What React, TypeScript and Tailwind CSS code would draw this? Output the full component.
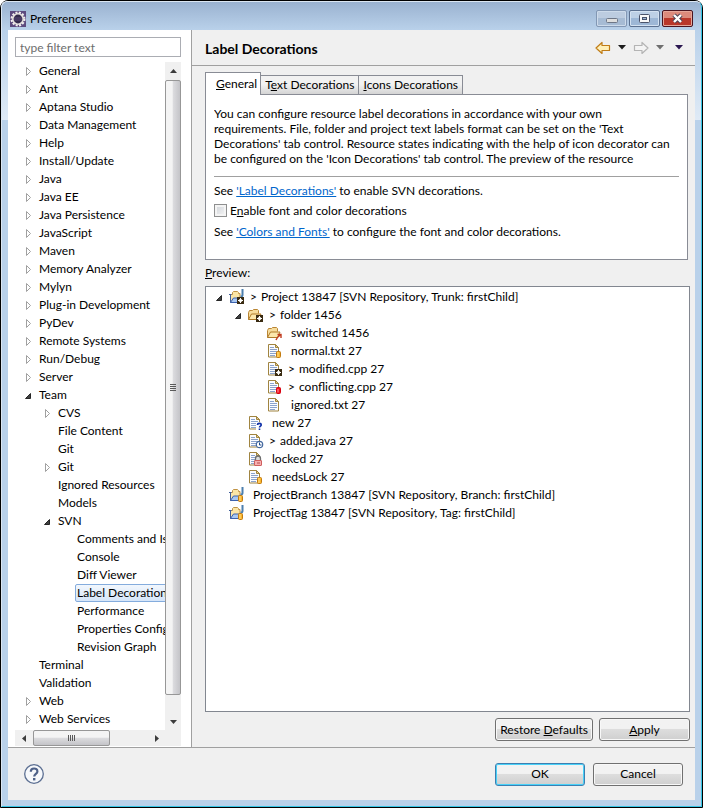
import clsx from "clsx";
import type { ReactNode } from "react";

type NavItem = {
  label: string;
  level: number;
  state?: "open" | "closed";
  selected?: boolean;
};

type PreviewItem = {
  label: string;
  level: number;
  icon: "project" | "folder" | "file";
  badge?: Badge;
  open?: boolean;
  dirty?: boolean;
};

type Badge = "star" | "switched" | "repo" | "conflict" | "new" | "added" | "lock";

const navItems: NavItem[] = [
  { label: "General", level: 0, state: "closed" },
  { label: "Ant", level: 0, state: "closed" },
  { label: "Aptana Studio", level: 0, state: "closed" },
  { label: "Data Management", level: 0, state: "closed" },
  { label: "Help", level: 0, state: "closed" },
  { label: "Install/Update", level: 0, state: "closed" },
  { label: "Java", level: 0, state: "closed" },
  { label: "Java EE", level: 0, state: "closed" },
  { label: "Java Persistence", level: 0, state: "closed" },
  { label: "JavaScript", level: 0, state: "closed" },
  { label: "Maven", level: 0, state: "closed" },
  { label: "Memory Analyzer", level: 0, state: "closed" },
  { label: "Mylyn", level: 0, state: "closed" },
  { label: "Plug-in Development", level: 0, state: "closed" },
  { label: "PyDev", level: 0, state: "closed" },
  { label: "Remote Systems", level: 0, state: "closed" },
  { label: "Run/Debug", level: 0, state: "closed" },
  { label: "Server", level: 0, state: "closed" },
  { label: "Team", level: 0, state: "open" },
  { label: "CVS", level: 1, state: "closed" },
  { label: "File Content", level: 1 },
  { label: "Git", level: 1 },
  { label: "Git", level: 1, state: "closed" },
  { label: "Ignored Resources", level: 1 },
  { label: "Models", level: 1 },
  { label: "SVN", level: 1, state: "open" },
  { label: "Comments and Issues", level: 2 },
  { label: "Console", level: 2 },
  { label: "Diff Viewer", level: 2 },
  { label: "Label Decorations", level: 2, selected: true },
  { label: "Performance", level: 2 },
  { label: "Properties Configuration", level: 2 },
  { label: "Revision Graph", level: 2 },
  { label: "Terminal", level: 0 },
  { label: "Validation", level: 0 },
  { label: "Web", level: 0, state: "closed" },
  { label: "Web Services", level: 0, state: "closed" },
];

const previewItems: PreviewItem[] = [
  { label: "Project 13847 [SVN Repository, Trunk: firstChild]", level: 0, icon: "project", badge: "star", open: true, dirty: true },
  { label: "folder 1456", level: 1, icon: "folder", badge: "star", open: true, dirty: true },
  { label: "switched 1456", level: 2, icon: "folder", badge: "switched" },
  { label: "normal.txt 27", level: 2, icon: "file", badge: "repo" },
  { label: "modified.cpp 27", level: 2, icon: "file", badge: "star", dirty: true },
  { label: "conflicting.cpp 27", level: 2, icon: "file", badge: "conflict", dirty: true },
  { label: "ignored.txt 27", level: 2, icon: "file" },
  { label: "new 27", level: 1, icon: "file", badge: "new" },
  { label: "added.java 27", level: 1, icon: "file", badge: "added", dirty: true },
  { label: "locked 27", level: 1, icon: "file", badge: "lock" },
  { label: "needsLock 27", level: 1, icon: "file", badge: "repo" },
  { label: "ProjectBranch 13847 [SVN Repository, Branch: firstChild]", level: 0, icon: "project", badge: "repo" },
  { label: "ProjectTag 13847 [SVN Repository, Tag: firstChild]", level: 0, icon: "project", badge: "repo" },
];

const indents = ["pl-0", "pl-[19px]", "pl-[38px]"];

function Expander({ state }: { state?: "open" | "closed" }) {
  return (
    <svg width="10" height="10" viewBox="0 0 10 10" className="shrink-0">
      {state === "closed" && <path d="M2.5 1.500v8L6.500 5.500z" fill="#fff" stroke="#a0a0a0" />}
      {state === "open" && <path d="M6.5 3.500v5h-5z" fill="#404040" stroke="#262626" />}
    </svg>
  );
}

function EclipseIcon() {
  return (
    <svg width="16" height="16" viewBox="0 0 16 16">
      <rect width="16" height="16" fill="#5d4a7e" />
      <circle cx="8" cy="8" r="6.3" fill="none" stroke="#f2eff0" strokeWidth="2.4" strokeDasharray="2 1.3" />
      <circle cx="8" cy="8" r="5.2" fill="#342a4c" stroke="#e4dfdc" strokeWidth="1.6" />
      <path d="M4 7h8M4 9h8" stroke="#5a4b78" />
    </svg>
  );
}

function BadgeShape({ badge }: { badge: Badge }) {
  switch (badge) {
    case "star":
      return (
        <g shapeRendering="crispEdges">
          <rect x="8" y="8" width="7" height="7" fill="#3a2b12" />
          <path d="M11 9h1v2h-1zM11 12h1v2h-1zM9 11h5v1h-5z" fill="#fff" />
          <path d="M10 10h1v1h-1zM12 10h1v1h-1zM10 12h1v1h-1zM12 12h1v1h-1z" fill="#cfc9bd" />
        </g>
      );
    case "switched":
      return (
        <path d="M9 15c0.500-2 1.500-3 4-4.800M10.500 9.500h3.500v3.500" fill="none" stroke="#c0391c" strokeWidth="1.400" />
      );
    case "repo":
      return (
        <g>
          <rect x="9.500" y="8.500" width="4" height="6" rx="1" fill="#f9b52c" stroke="#c27a10" />
          <path d="M11 9v5" stroke="#ffe08a" />
        </g>
      );
    case "conflict":
      return (
        <g>
          <rect x="9.500" y="8.500" width="4" height="6" rx="1" fill="#f3111d" stroke="#d8000f" />
          <path d="M11 10v3.500" stroke="#ff9b9b" />
        </g>
      );
    case "new":
      return (
        <g fill="none">
          <rect x="8" y="7" width="6" height="8" fill="#fff" />
          <path d="M9.500 10c0-2.200 3.700-2.200 3.700 0 0 1.200-1.700 1.200-1.700 2.600M11.500 13.500v1.500" stroke="#0d2fa8" strokeWidth="1.600" />
        </g>
      );
    case "added":
      return (
        <g>
          <circle cx="11.500" cy="11.500" r="3.200" fill="#fff" stroke="#44699f" strokeWidth="1.200" />
          <path d="M11.500 9.500V12h2" fill="none" stroke="#1f4a8c" />
        </g>
      );
    case "lock":
      return (
        <g>
          <path d="M7.500 10.500v-3a2.500 2.500 0 0 1 5 0v3" fill="#ddd" stroke="#6e6e6e" strokeWidth="1.300" />
          <rect x="6.500" y="9.500" width="7" height="5" rx="0.500" fill="#f6b0b0" stroke="#cf5f5f" />
          <path d="M9 12h3" stroke="#b94a4a" />
        </g>
      );
  }
}

function ResourceIcon({ icon, badge }: { icon: PreviewItem["icon"]; badge?: Badge }) {
  return (
    <svg width="16" height="16" viewBox="0 0 16 16" className="shrink-0">
      {icon === "file" && (
        <g>
          <path d="M1.500 1.500h7l3 3v9.500h-10z" fill="#fbfcff" stroke="#a08440" />
          <path d="M8.500 1.500v3h3z" fill="#e8cf8b" stroke="#a08440" />
          <path d="M3 4.500h4M3 6.500h7M3 8.500h7M3 10.500h7M3 12.500h5" stroke="#8ba3cc" />
        </g>
      )}
      {icon === "folder" && (
        <g>
          <path d="M0.500 12.500V5.500l1-2h3l1-1h4l1 1v3" fill="#f6dc9c" stroke="#b98534" />
          <path d="M0.500 12.500l3-5.500h9.500l-2.500 5.500z" fill="#fbe7ac" stroke="#b07a29" />
        </g>
      )}
      {icon === "project" && (
        <g>
          <path d="M1.500 13.500v-8h2v-2l1-1h4l1 1v1h1.500v9z" fill="#fbe6a6" stroke="#c09345" />
          <path d="M0 5.500h2.500M1.500 5v8.500" fill="none" stroke="#41609c" />
          <path d="M1.500 13.500l3-4.500h7.500l-2 4.500z" fill="#a9c8f2" stroke="#3d62ad" />
          <path d="M13.500 0v6q0 1.500-2 1.500" fill="none" stroke="#4c7fae" strokeWidth="2" />
        </g>
      )}
      {badge && <BadgeShape badge={badge} />}
    </svg>
  );
}

function NavArrow({ forward }: { forward?: boolean }) {
  return (
    <svg width="16" height="14" viewBox="0 0 16 14" className={clsx(forward && "-scale-x-100")}>
      <path
        d="M1 7l6-5.500v3h7.500v5H7v3z"
        fill={forward ? "#f4f4f4" : "#fff0b8"}
        stroke={forward ? "#b4b4b4" : "#c07c17"}
        strokeWidth="1.200"
        strokeLinejoin="round"
      />
    </svg>
  );
}

function Caret({ color }: { color: string }) {
  return (
    <svg width="8" height="5" viewBox="0 0 8 5">
      <path d="M0 0h8l-4 4.500z" fill={color} />
    </svg>
  );
}

function ScrollArrow({ label, d, className }: { label: string; d: string; className: string }) {
  return (
    <button type="button" aria-label={label} className={clsx("flex shrink-0 items-center justify-center", className)}>
      <svg width="7" height="7" viewBox="0 0 7 7">
        <path d={d} fill="#3c3c3c" />
      </svg>
    </button>
  );
}

function PushButton({ children, primary }: { children: ReactNode; primary?: boolean }) {
  return (
    <button
      type="button"
      className={clsx(
        "h-[23px] rounded-[3px] border bg-linear-to-b from-[#f2f2f2] from-45% via-[#dddddd] via-50% to-[#cfcfcf] px-1 whitespace-nowrap",
        primary
          ? "border-[#3c7fb1] inset-ring-1 inset-ring-[#48d1f8]"
          : "border-[#707070] inset-ring-1 inset-ring-[#f8f8f8]",
      )}
    >
      {children}
    </button>
  );
}

function TitleBar() {
  return (
    <header className="flex h-7 shrink-0 items-center justify-between px-0.5">
      <div className="flex items-center gap-1 pt-1.5">
        <EclipseIcon />
        <span>Preferences</span>
      </div>
      <div className="flex gap-0.5 pt-1">
        <button type="button" aria-label="Minimize" className="flex h-[17px] w-[31px] items-center justify-center rounded-xs border border-[#8297b4] bg-linear-to-b from-[#bccce0] from-50% to-[#a6bbd4] to-50% pt-1 inset-ring-1 inset-ring-[#cddbeb]">
          <svg width="12" height="5" viewBox="0 0 12 5">
            <rect x="0.500" y="0.500" width="11" height="4" rx="1" fill="#dedede" stroke="#6d7686" />
          </svg>
        </button>
        <button type="button" aria-label="Maximize" className="flex h-[17px] w-[31px] items-center justify-center rounded-xs border border-[#5b7090] bg-linear-to-b from-[#bdd0e6] from-50% to-[#9db7d6] to-50% inset-ring-1 inset-ring-[#d3e1f1]">
          <svg width="11" height="9" viewBox="0 0 11 9">
            <rect x="0.500" y="0.500" width="10" height="8" rx="1" fill="#f8f8f8" stroke="#4a536a" />
            <rect x="3.500" y="3.500" width="4" height="2" fill="#9db7d6" stroke="#4a536a" />
          </svg>
        </button>
        <button type="button" aria-label="Close" className="flex h-[17px] w-[31px] items-center justify-center rounded-xs border border-[#4a1420] bg-linear-to-b from-[#dc8a7c] from-50% to-[#b9372a] to-50% inset-ring-1 inset-ring-[#e5a79a]">
          <svg width="13" height="11" viewBox="0 0 13 11">
            <path d="M3 2l7 7M10 2L3 9" stroke="#4f4456" strokeWidth="4.400" />
            <path d="M3 2l7 7M10 2L3 9" stroke="#fff" strokeWidth="2.400" />
          </svg>
        </button>
      </div>
    </header>
  );
}

function Sidebar() {
  return (
    <aside className="flex w-[184px] shrink-0 flex-col border-r border-[#a0a0a0] bg-white pt-[7px] pr-2.5 pl-[7px]">
      <input
        type="text"
        aria-label="Filter"
        placeholder="type filter text"
        className="mb-[5px] h-5 w-full border border-[#abadb3] px-1 placeholder:text-[#6d6d6d] placeholder:opacity-100"
      />
      <div className="flex min-h-0 flex-1">
        <ul className="min-w-0 flex-1 overflow-hidden pl-[9px]">
          {navItems.map((item, i) => (
            <li key={i} className={clsx("flex h-[18px] items-center", indents[item.level])}>
              <Expander state={item.state} />
              <a
                href="#"
                className={clsx(
                  "ml-[3px] h-[18px] border px-px leading-4 whitespace-nowrap",
                  item.selected
                    ? "rounded-xs border-[#84acdd] bg-linear-to-b from-[#f2f7fd] to-[#d5e5f9]"
                    : "border-transparent",
                )}
              >
                {item.label}
              </a>
            </li>
          ))}
        </ul>
        <div className="flex w-4 flex-col bg-[#f0f0f0]">
          <ScrollArrow label="Scroll up" d="M0 5l3.500-4L7 5z" className="h-[18px] w-4" />
          <div className="flex flex-1 flex-col items-center justify-center gap-px rounded-xs border border-[#979797] bg-linear-to-r from-[#f4f4f4] from-45% via-[#dcdcdf] via-50% to-[#c4c4c8]">
            {[0, 1, 2, 3].map((n) => (
              <span key={n} className="h-px w-1.5 bg-[#5a5a5a]" />
            ))}
          </div>
          <ScrollArrow label="Scroll down" d="M0 2h7l-3.500 4z" className="mt-[17px] h-[18px] w-4" />
        </div>
      </div>
      <div className="mb-px flex h-4 bg-[#f0f0f0] pr-4">
        <ScrollArrow label="Scroll left" d="M5 0v7l-4-3.500z" className="h-4 w-[18px]" />
        <div className="flex w-[77px] items-center justify-center gap-px rounded-xs border border-[#979797] bg-linear-to-b from-[#f4f4f4] from-45% via-[#dcdcdf] via-50% to-[#c4c4c8]">
          {[0, 1, 2, 3].map((n) => (
            <span key={n} className="h-1.5 w-px bg-[#5a5a5a]" />
          ))}
        </div>
        <ScrollArrow label="Scroll right" d="M2 0v7l4-3.500z" className="ml-auto h-4 w-[18px]" />
      </div>
    </aside>
  );
}

function Tabs() {
  const idle =
    "h-[19px] border border-b-0 border-l-0 border-[#898c95] bg-linear-to-b from-[#f2f2f2] from-45% to-[#d4d4d4] px-1 leading-[18px] whitespace-nowrap";
  return (
    <div role="tablist" className="flex items-end">
      <button type="button" role="tab" aria-selected="true" className="relative z-10 -mb-px h-[23px] border border-b-0 border-[#898c95] bg-white pr-[3px] pl-2.5">
        <u>G</u>eneral
      </button>
      <button type="button" role="tab" aria-selected="false" className={idle}>
        T<u>e</u>xt Decorations
      </button>
      <button type="button" role="tab" aria-selected="false" className={idle}>
        <u>I</u>cons Decorations
      </button>
    </div>
  );
}

function GeneralPanel() {
  return (
    <section className="mr-0.5 h-[166px] border border-[#898c95] bg-white px-2 pt-[11px] leading-[15px]">
      <p className="h-[60px] overflow-hidden whitespace-nowrap">
        You can configure resource label decorations in accordance with your own
        <br />
        requirements. File, folder and project text labels format can be set on the 'Text
        <br />
        Decorations' tab control. Resource states indicating with the help of icon decorator can
        <br />
        be configured on the 'Icon Decorations' tab control. The preview of the resource
      </p>
      <hr className="mt-2.5 mb-1.5 border-[#a0a0a0]" />
      <p>
        See <a href="#" className="text-[#0066cc] underline">'Label Decorations'</a> to enable SVN decorations.
      </p>
      <label className="mt-1 mb-1.5 flex h-4 items-center gap-[3px]">
        <input
          type="checkbox"
          className="size-[13px] appearance-none border border-[#8e8f8f] bg-linear-to-br from-[#cfd3d8] to-[#f6f6f6] inset-ring-2 inset-ring-[#f4f4f4]"
        />
        <span>
          E<u>n</u>able font and color decorations
        </span>
      </label>
      <p>
        See <a href="#" className="text-[#0066cc] underline">'Colors and Fonts'</a> to configure the font and color decorations.
      </p>
    </section>
  );
}

function Preview() {
  return (
    <ul className="flex-1 border border-[#828790] bg-white pt-px pl-[9px]">
      {previewItems.map((item) => (
        <li key={item.label} className={clsx("flex h-[18px] items-center whitespace-nowrap", indents[item.level])}>
          <Expander state={item.open ? "open" : undefined} />
          <span className="ml-1 flex">
            <ResourceIcon icon={item.icon} badge={item.badge} />
          </span>
          {item.dirty && <span className="-mr-1 ml-[5px]">&gt;</span>}
          <span className="ml-2">{item.label}</span>
        </li>
      ))}
    </ul>
  );
}

export default function App() {
  return (
    <div className="flex min-h-screen flex-col rounded-t-lg border border-black bg-[#b9d1ea] font-[Lato,'Open_Sans',sans-serif] text-[12px] text-black">
      <div className="flex flex-1 flex-col rounded-t-md border border-t-[#dbe6f2] border-r-[#35c5e5] border-b-[#35c5e5] border-l-[#dbe6f2] bg-[linear-gradient(#9ab2d0,#b9d1ea_28px,#dfeaf6_118px,#b9d1ea_118px)] px-1.5 pb-1.5">
        <TitleBar />
        <div className="flex flex-1 flex-col bg-[#f0f0f0]">
          <div className="flex flex-1">
            <Sidebar />
            <main className="flex min-w-0 flex-1 flex-col">
              <div className="flex h-9 items-center justify-between border-b border-[#a0a0a0] pr-3 pl-[13px]">
                <h1 className="pt-0.5 text-sm font-bold">Label Decorations</h1>
                <div className="flex items-center gap-[7px]">
                  <button type="button" aria-label="Back"><NavArrow /></button>
                  <button type="button" aria-label="Back history"><Caret color="#1c1c1c" /></button>
                  <button type="button" aria-label="Forward"><NavArrow forward /></button>
                  <button type="button" aria-label="Forward history"><Caret color="#6f6f6f" /></button>
                  <button type="button" aria-label="Menu" className="ml-1"><Caret color="#2a1650" /></button>
                </div>
              </div>
              <div className="flex flex-1 flex-col pt-1.5 pr-[5px] pb-1.5 pl-[13px]">
                <Tabs />
                <GeneralPanel />
                <h2 className="my-1 leading-[18px]">
                  <u>P</u>review:
                </h2>
                <Preview />
                <div className="mt-1.5 flex justify-end gap-1.5">
                  <PushButton>
                    Restore <u>D</u>efaults
                  </PushButton>
                  <div className="grid w-[91px]">
                    <PushButton>
                      <u>A</u>pply
                    </PushButton>
                  </div>
                </div>
              </div>
            </main>
          </div>
          <footer className="flex h-[53px] items-center justify-between border-t border-[#a0a0a0] pr-3 pl-4">
            <button type="button" aria-label="Help">
              <svg width="20" height="20" viewBox="0 0 20 20">
                <circle cx="10" cy="10" r="9.300" fill="#f6f8fb" stroke="#5c6f92" strokeWidth="1.300" />
                <path d="M6.800 7.700c0-4.200 6.600-4.200 6.600-0.300 0 2.400-3.200 2.400-3.200 5" fill="none" stroke="#4e6189" strokeWidth="2.200" />
                <rect x="9" y="14" width="2.400" height="2.400" fill="#4e6189" />
              </svg>
            </button>
            <div className="grid w-[188px] grid-cols-2 gap-2">
              <PushButton primary>OK</PushButton>
              <PushButton>Cancel</PushButton>
            </div>
          </footer>
        </div>
      </div>
    </div>
  );
}
